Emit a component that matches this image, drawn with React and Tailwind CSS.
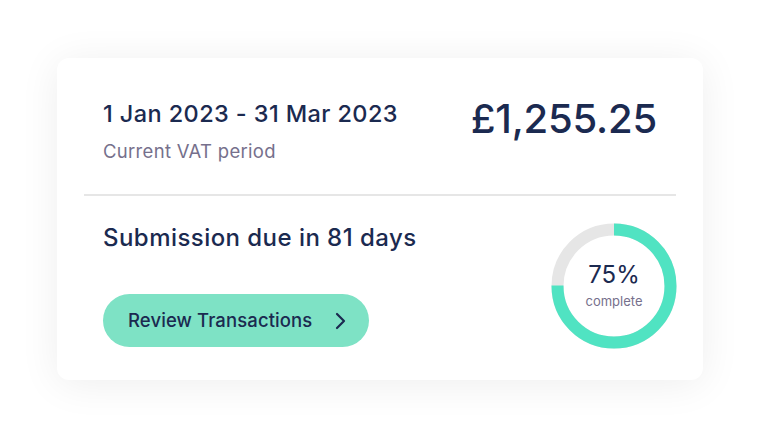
import React from 'react';

const Ring = ({ pct }) => {
  const r = 56.5;
  const c = 2 * Math.PI * r;
  return (
    <div className="relative w-[126px] h-[126px]">
      <svg width="126" height="126" viewBox="0 0 126 126" className="-rotate-90">
        <circle cx="63" cy="63" r={r} fill="none" stroke="#e6e6e6" strokeWidth="12" />
        <circle
          cx="63"
          cy="63"
          r={r}
          fill="none"
          stroke="#50e3c2"
          strokeWidth="12"
          strokeDasharray={`${c * pct / 100} ${c}`}
        />
      </svg>
      <div className="absolute inset-0 flex flex-col items-center justify-center -mt-[2px]">
        <span className="text-[24px] leading-none text-[#1b2a50]">{pct}%</span>
        <span className="text-[13px] leading-none mt-[8px] text-[#76708c]">complete</span>
      </div>
    </div>
  );
};

export default function App() {
  return (
    <div className="w-[760px] h-[436px] bg-white flex items-start justify-center pt-[58px] font-['Inter',sans-serif]">
      <div className="w-[646px] h-[322px] bg-white rounded-[12px] shadow-[0_4px_40px_rgba(0,0,0,0.07)] flex flex-col">
        <div className="flex items-start justify-between pl-[46px] pr-[46px] pt-[41px] h-[136px]">
          <div className="flex flex-col">
            <span className="text-[23.5px] leading-[30px] font-medium tracking-[0.4px] text-[#1b2a50]">1 Jan 2023 - 31 Mar 2023</span>
            <span className="text-[18.5px] leading-[22px] mt-[11px] tracking-[0.3px] text-[#76708c]">Current VAT period</span>
          </div>
          <span className="text-[40px] leading-[44px] font-medium text-[#1b2a50] -mt-[2px] tracking-[-0.2px]">£1,255.25</span>
        </div>
        <div className="mx-[27px] h-[2px] bg-[#e6e6e6]" />
        <div className="flex justify-between pl-[46px] pr-[26px] pt-[26px]">
          <div className="flex flex-col">
            <span className="text-[24px] leading-[32px] font-medium tracking-[0.45px] text-[#1b2a50]">Submission due in 81 days</span>
            <button className="mt-[40px] w-[266px] h-[53px] rounded-full bg-[#7ee2c5] flex items-center justify-between pl-[25px] pr-[22px]">
              <span className="text-[18.5px] font-medium tracking-[0.1px] text-[#1b2a50]">Review Transactions</span>
              <svg width="14" height="18" viewBox="0 0 14 18" fill="none" stroke="#1b2a50" strokeWidth="2.2" strokeLinecap="round" strokeLinejoin="round">
                <path d="M4 2l7 7-7 7" />
              </svg>
            </button>
          </div>
          <div className="pt-[1px]">
            <Ring pct={75} />
          </div>
        </div>
      </div>
    </div>
  );
}
